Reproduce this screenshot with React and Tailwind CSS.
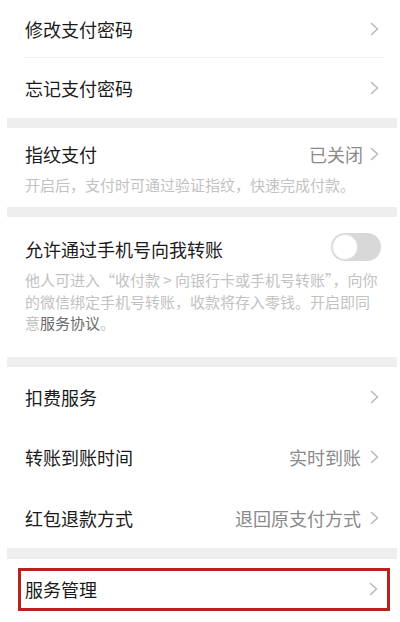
import React from "react";

const font = { fontFamily: '"Noto Sans CJK SC", "Noto Sans", sans-serif' };

function Chevron() {
  return (
    <svg width="9" height="14" viewBox="0 0 9 14" fill="none" className="shrink-0">
      <path d="M1.5 1.5l6 5.5-6 5.5" stroke="#b8b8b8" strokeWidth="1.6" strokeLinecap="round" strokeLinejoin="round" />
    </svg>
  );
}

function Band({ h = "h-[10px]" }) {
  return <div className={`${h} ml-[7px] mr-[3px] bg-[#eeeeee]`} />;
}

function Row({ title, value, h = "h-[60px]" }) {
  return (
    <div className={`${h} flex items-center justify-between pl-[25px] pr-[21px]`}>
      <span className="text-[18px] leading-6 text-[#1a1a1a]">{title}</span>
      <div className="flex items-center gap-[9px]">
        {value && <span className="text-[18px] leading-6 text-[#8a8a8a]">{value}</span>}
        <Chevron />
      </div>
    </div>
  );
}

export default function App() {
  return (
    <div className="w-[400px] h-[622px] overflow-hidden bg-white" style={font}>
      {/* password section */}
      <Row title="修改支付密码" h="h-[57px]" />
      <div className="h-px ml-[25px] mr-[17px] bg-[#f0f0f0]" />
      <Row title="忘记支付密码" />
      <Band />

      {/* fingerprint */}
      <div className="pt-[14px] pb-[12px] pl-[25px] pr-[21px]">
        <div className="flex items-center justify-between">
          <span className="text-[18px] leading-6 text-[#1a1a1a]">指纹支付</span>
          <div className="flex items-center gap-[7px]">
            <span className="text-[18px] leading-6 text-[#8a8a8a]">已关闭</span>
            <Chevron />
          </div>
        </div>
        <p className="mt-[9px] text-[15px] leading-5 text-[#c2c2c2]">
          开启后，支付时可通过验证指纹，快速完成付款。
        </p>
      </div>
      <Band />

      {/* phone transfer */}
      <div className="pt-[16px] pb-[23px] pl-[25px] pr-[19px]">
        <div className="flex items-center justify-between">
          <span className="text-[18px] leading-6 text-[#1a1a1a] mt-[4px]">允许通过手机号向我转账</span>
          <div className="w-[50px] h-[28px] rounded-full bg-[#d8d8d8] flex items-center p-[1px]">
            <div className="w-[26px] h-[26px] rounded-full bg-white border border-[#e2e2e2]" />
          </div>
        </div>
        <div className="mt-[8px] text-[15px] leading-[21.5px] text-[#c2c2c2] whitespace-nowrap">
          <div>他人可进入“收付款 &gt; 向银行卡或手机号转账”，向你</div>
          <div>的微信绑定手机号转账，收款将存入零钱。开启即同</div>
          <div>
            意<span className="text-[#6b6b6b]">服务协议</span>。
          </div>
        </div>
      </div>
      <Band />

      {/* services */}
      <Row title="扣费服务" />
      <Row title="转账到账时间" value="实时到账" h="h-[61px]" />
      <Row title="红包退款方式" value="退回原支付方式" />
      <Band h="h-[11px]" />

      <div className="pt-[9px]">
        <div className="ml-[18px] w-[372px] h-[43px] border-[3px] border-[#b3241e] flex items-center justify-between pl-[4px] pr-[9px]">
          <span className="text-[18px] leading-6 text-[#1a1a1a]">服务管理</span>
          <Chevron />
        </div>
      </div>
    </div>
  );
}
